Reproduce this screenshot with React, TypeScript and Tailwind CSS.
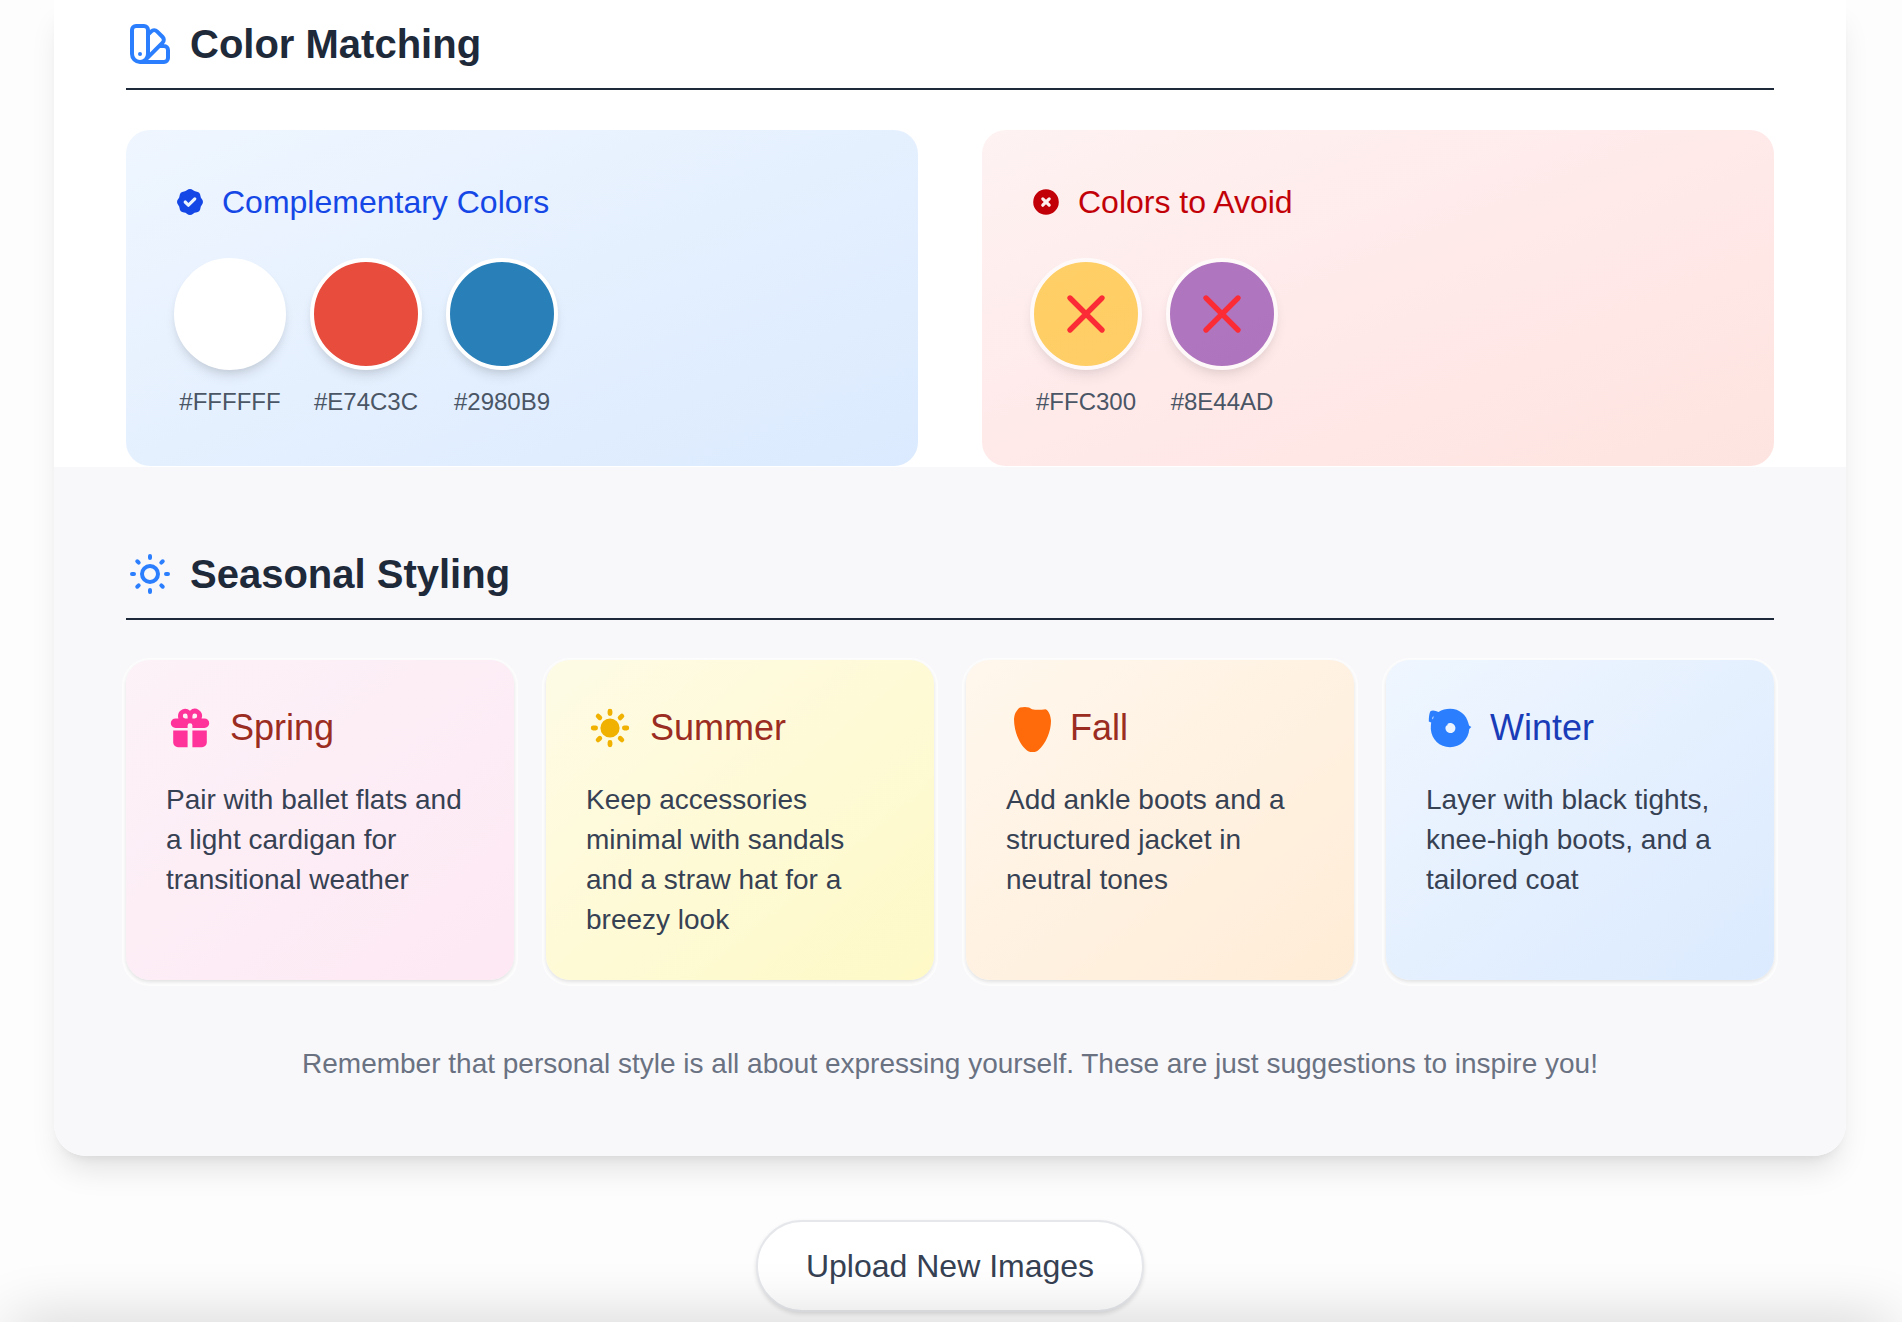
import type { ReactNode } from "react";

const complementary = [
  { hex: "#FFFFFF", fill: "bg-[#ffffff]" },
  { hex: "#E74C3C", fill: "bg-[#e74c3c]" },
  { hex: "#2980B9", fill: "bg-[#2980b9]" },
];

const avoid = [
  { hex: "#FFC300", fill: "bg-[#ffc32e]" },
  { hex: "#8E44AD", fill: "bg-[#8e44ad]" },
];

const seasons = [
  {
    name: "Spring",
    text: "Pair with ballet flats and a light cardigan for transitional weather",
    card: "from-pink-50 to-[#fde8f3]",
    title: "text-[#9b2c22]",
    icon: <GiftIcon />,
  },
  {
    name: "Summer",
    text: "Keep accessories minimal with sandals and a straw hat for a breezy look",
    card: "from-[#fefbe6] to-[#fef9c6]",
    title: "text-[#9b2c22]",
    icon: <SunSolidIcon />,
  },
  {
    name: "Fall",
    text: "Add ankle boots and a structured jacket in neutral tones",
    card: "from-orange-50 to-[#ffecd6]",
    title: "text-[#9b2c22]",
    icon: <LeafIcon />,
  },
  {
    name: "Winter",
    text: "Layer with black tights, knee-high boots, and a tailored coat",
    card: "from-blue-50 to-blue-100",
    title: "text-blue-800",
    icon: <SnowIcon />,
  },
];

function SwatchIcon() {
  return (
    <svg className="size-12 text-blue-500" fill="none" viewBox="0 0 24 24" stroke="currentColor" aria-hidden="true">
      <path
        strokeLinecap="round"
        strokeLinejoin="round"
        strokeWidth={2}
        d="M7 21a4 4 0 01-4-4V5a2 2 0 012-2h4a2 2 0 012 2v12a4 4 0 01-4 4zm0 0h12a2 2 0 002-2v-4a2 2 0 00-2-2h-2.343M11 7.343l1.657-1.657a2 2 0 012.828 0l2.829 2.829a2 2 0 010 2.828l-8.486 8.485M7 17h.01"
      />
    </svg>
  );
}

function SunIcon() {
  return (
    <svg className="size-12 text-blue-500" fill="none" viewBox="0 0 24 24" stroke="currentColor" aria-hidden="true">
      <path
        strokeLinecap="round"
        strokeLinejoin="round"
        strokeWidth={2}
        d="M12 3v1m0 16v1m9-9h-1M4 12H3m15.364 6.364l-.707-.707M6.343 6.343l-.707-.707m12.728 0l-.707.707m-11.314 11.314l-.707.707M16 12a4 4 0 11-8 0 4 4 0 018 0z"
      />
    </svg>
  );
}

function BadgeCheckIcon() {
  return (
    <svg className="size-8" fill="currentColor" viewBox="0 0 20 20" aria-hidden="true">
      <path
        fillRule="evenodd"
        clipRule="evenodd"
        d="M6.267 3.455a3.066 3.066 0 001.745-.723 3.066 3.066 0 013.976 0 3.066 3.066 0 001.745.723 3.066 3.066 0 012.812 2.812c.051.643.304 1.254.723 1.745a3.066 3.066 0 010 3.976 3.066 3.066 0 00-.723 1.745 3.066 3.066 0 01-2.812 2.812 3.066 3.066 0 00-1.745.723 3.066 3.066 0 01-3.976 0 3.066 3.066 0 00-1.745-.723 3.066 3.066 0 01-2.812-2.812 3.066 3.066 0 00-.723-1.745 3.066 3.066 0 010-3.976 3.066 3.066 0 00.723-1.745 3.066 3.066 0 012.812-2.812zm7.44 5.252a1 1 0 00-1.414-1.414L9 10.586 7.707 9.293a1 1 0 00-1.414 1.414l2 2a1 1 0 001.414 0l4-4z"
      />
    </svg>
  );
}

function XCircleIcon() {
  return (
    <svg className="size-8" fill="currentColor" viewBox="0 0 20 20" aria-hidden="true">
      <path
        fillRule="evenodd"
        clipRule="evenodd"
        d="M10 18a8 8 0 100-16 8 8 0 000 16zM8.707 7.293a1 1 0 00-1.414 1.414L8.586 10l-1.293 1.293a1 1 0 101.414 1.414L10 11.414l1.293 1.293a1 1 0 001.414-1.414L11.414 10l1.293-1.293a1 1 0 00-1.414-1.414L10 8.586 8.707 7.293z"
      />
    </svg>
  );
}

function GiftIcon() {
  return (
    <svg className="size-12 text-[#ff3399]" fill="currentColor" viewBox="0 0 20 20" aria-hidden="true">
      <path
        fillRule="evenodd"
        clipRule="evenodd"
        d="M5 5a3 3 0 015-2.236A3 3 0 0114.83 6H16a2 2 0 110 4h-5V9a1 1 0 10-2 0v1H4a2 2 0 110-4h1.17C5.06 5.687 5 5.35 5 5zm4 1V5a1 1 0 10-1 1h1zm3 0a1 1 0 10-1-1v1h1z"
      />
      <path d="M9 11H3v5a2 2 0 002 2h4v-7zM11 18h4a2 2 0 002-2v-5h-6v7z" />
    </svg>
  );
}

function SunSolidIcon() {
  return (
    <svg className="size-12 text-[#f0b100]" fill="currentColor" viewBox="0 0 20 20" aria-hidden="true">
      <path
        fillRule="evenodd"
        clipRule="evenodd"
        d="M10 2a1 1 0 011 1v1a1 1 0 11-2 0V3a1 1 0 011-1zm4 8a4 4 0 11-8 0 4 4 0 018 0zm-.464 4.95l.707.707a1 1 0 001.414-1.414l-.707-.707a1 1 0 00-1.414 1.414zm2.12-10.607a1 1 0 010 1.414l-.706.707a1 1 0 11-1.414-1.414l.707-.707a1 1 0 011.414 0zM17 11a1 1 0 100-2h-1a1 1 0 100 2h1zm-7 4a1 1 0 011 1v1a1 1 0 11-2 0v-1a1 1 0 011-1zM5.05 6.464A1 1 0 106.465 5.05l-.708-.707a1 1 0 00-1.414 1.414l.707.707zm1.414 8.486l-.707.707a1 1 0 01-1.414-1.414l.707-.707a1 1 0 011.414 1.414zM4 11a1 1 0 100-2H3a1 1 0 000 2h1z"
      />
    </svg>
  );
}

function LeafIcon() {
  return (
    <svg className="size-12 text-[#ff6b0a]" fill="currentColor" viewBox="0 0 48 48" aria-hidden="true">
      <path d="M14 3.6Q18.500 2.400 23 3.400Q26 5.600 29 5.700Q34 6.100 39.500 5.200C42.500 6 44.800 11.500 45 17C45 27 40 40 32 46.500Q26.500 50 21 46.500C13 40 8 27 8 15C8.500 11 9 9 10.700 7Q12.300 4.200 14 3.600Z" />
    </svg>
  );
}

function SnowIcon() {
  return (
    <svg className="size-12 text-blue-500" fill="currentColor" viewBox="0 0 48 48" aria-hidden="true">
      <path
        fillRule="evenodd"
        d="M24 4.800C33.500 4.800 40.500 11 42.500 19.500L43 21.500L45.300 23L43.300 25C42.600 35.500 34.500 43.200 24 43.200C13.500 43.200 5.500 35.500 4.800 25Q4.700 21 5.200 18.500L2.800 17.500C2.800 13 3.300 9 4.600 7C7 5.800 10 6.800 12.500 8C15.800 6 20 4.800 24 4.800ZM21.500 20Q22 22 20 21.800A5 5 0 1 0 25 19.100Q23 18.600 21.500 20ZM6.300 15.500Q8 14 7.300 12Q6 13.500 6.300 15.500Z"
      />
    </svg>
  );
}

function SectionHeader({ icon, title }: { icon: ReactNode; title: string }) {
  return (
    <div className="mb-10 flex items-center gap-4 border-b-2 border-gray-800 pb-4">
      {icon}
      <h2 className="text-[40px] leading-14 font-bold text-gray-800">{title}</h2>
    </div>
  );
}

function Swatch({ hex, fill, crossed = false }: { hex: string; fill: string; crossed?: boolean }) {
  return (
    <li className="flex w-28 flex-col items-center gap-4">
      <div className="relative">
        <div
          className={`size-28 rounded-full border-4 border-white shadow-[0_8px_12px_-2px_rgba(0,0,0,0.1),0_4px_8px_-4px_rgba(0,0,0,0.1)] ${fill} ${crossed ? "opacity-70" : ""}`}
        />
        {crossed && (
          <svg
            className="absolute inset-0 m-auto size-16 text-[#fb2c36]"
            fill="none"
            viewBox="0 0 24 24"
            stroke="currentColor"
            aria-hidden="true"
          >
            <path strokeLinecap="round" strokeLinejoin="round" strokeWidth={2} d="M6 18L18 6M6 6l12 12" />
          </svg>
        )}
      </div>
      <span className="text-2xl text-gray-600">{hex}</span>
    </li>
  );
}

export default function App() {
  return (
    <div className="min-h-screen overflow-hidden bg-[#fdfdfe] pr-14 pl-[54px] font-['Liberation_Sans',Arial,sans-serif]">
      <main className="overflow-hidden rounded-b-4xl bg-white shadow-[0_20px_30px_-6px_rgba(0,0,0,0.1),0_8px_12px_-8px_rgba(0,0,0,0.1)]">
        <section className="px-18 pt-4 pb-px">
          <SectionHeader icon={<SwatchIcon />} title="Color Matching" />
          <div className="grid grid-cols-2 gap-16">
            <div className="rounded-3xl bg-linear-to-br from-blue-50 to-blue-100 p-12">
              <h3 className="mb-8 flex items-center gap-4 text-[32px] leading-12 text-blue-700">
                <BadgeCheckIcon />
                Complementary Colors
              </h3>
              <ul className="flex gap-6">
                {complementary.map((color) => (
                  <Swatch key={color.hex} {...color} />
                ))}
              </ul>
            </div>
            <div className="rounded-3xl bg-linear-to-br from-red-50 via-[#ffe9e9] to-[#fee4e0] p-12">
              <h3 className="mb-8 flex items-center gap-4 text-[32px] leading-12 text-red-700">
                <XCircleIcon />
                Colors to Avoid
              </h3>
              <ul className="flex gap-6">
                {avoid.map((color) => (
                  <Swatch key={color.hex} {...color} crossed />
                ))}
              </ul>
            </div>
          </div>
        </section>

        <section className="bg-[#f8f8fb] px-18 pt-[79px] pb-18">
          <SectionHeader icon={<SunIcon />} title="Seasonal Styling" />
          <div className="grid grid-cols-4 gap-8">
            {seasons.map((season) => (
              <article
                key={season.name}
                className={`rounded-3xl bg-linear-to-br p-10 shadow-[0_2px_4px_rgba(0,0,0,0.12),0_2px_0_4px_#fefefe] ${season.card}`}
              >
                <h3 className={`mb-6 flex items-center gap-4 text-4xl leading-14 ${season.title}`}>
                  {season.icon}
                  {season.name}
                </h3>
                <p className="text-[28px] leading-10 text-gray-700">{season.text}</p>
              </article>
            ))}
          </div>
          <p className="mt-16 text-center text-[28px] leading-10 text-gray-500">
            Remember that personal style is all about expressing yourself. These are just suggestions to inspire you!
          </p>
        </section>
      </main>

      <div className="flex justify-center pt-16 pb-2">
        <button
          type="button"
          className="cursor-pointer rounded-full border-2 border-gray-200 bg-white px-12 py-5 text-[32px] leading-12 text-gray-700 shadow-[0_2px_4px_rgba(0,0,0,0.12)]"
        >
          Upload New Images
        </button>
      </div>

      {/* soft shade along the bottom edge of the window */}
      <div className="pointer-events-none fixed inset-x-8 bottom-0 shadow-[0_20px_60px_20px_rgba(0,0,0,0.2)]" />
    </div>
  );
}
